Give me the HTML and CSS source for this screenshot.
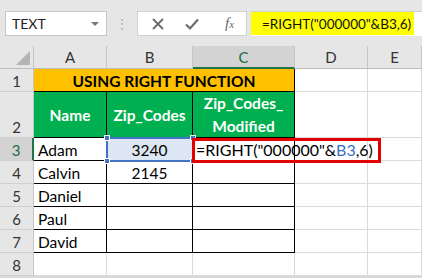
FILE: index.html
```html
<!DOCTYPE html>
<html>
<head>
<meta charset="utf-8">
<link rel="stylesheet" href="styles.css">
</head>
<body>
<div class="toolbar">
  <div class="namebox"><span>TEXT</span><span class="caret"></span></div>
  <div class="grip">⋮</div>
  <div class="fbtns">
    <svg class="ico" width="14" height="14" viewBox="0 0 14 14"><path d="M2 2L12 12M12 2L2 12" stroke="#6b6b6b" stroke-width="1.8" fill="none"/></svg>
    <svg class="ico" width="16" height="14" viewBox="0 0 16 14"><path d="M2 7.5L6 11.5L14 2.5" stroke="#6b6b6b" stroke-width="2.2" fill="none"/></svg>
    <span class="fx"><i>f</i><small>x</small></span>
  </div>
  <div class="fwrap"><div class="fbar"><span class="ftext">=RIGHT("000000"&amp;B3,6)</span></div></div>
</div>
<div class="sheet">
  <div class="corner"><span class="tri"></span></div>
  <div class="ch">A</div><div class="ch">B</div><div class="ch sel">C</div><div class="ch">D</div><div class="ch">E</div>

  <div class="rh">1</div>
  <div class="c title">USING RIGHT FUNCTION</div>
  <div class="c"></div><div class="c"></div>

  <div class="rh tall">2</div>
  <div class="c head">Name</div><div class="c head">Zip_Codes</div><div class="c head wrap">Zip_Codes_<br>Modified</div>
  <div class="c"></div><div class="c"></div>

  <div class="rh sel">3</div>
  <div class="c b">Adam</div><div class="c b num active">3240</div><div class="c b formula">=RIGHT("000000"&amp;<span class="ref">B3</span>,6)<span class="cur"></span></div>
  <div class="c"></div><div class="c"></div>

  <div class="rh">4</div>
  <div class="c b">Calvin</div><div class="c b num">2145</div><div class="c b"></div>
  <div class="c"></div><div class="c"></div>

  <div class="rh">5</div>
  <div class="c b">Daniel</div><div class="c b"></div><div class="c b"></div>
  <div class="c"></div><div class="c"></div>

  <div class="rh">6</div>
  <div class="c b">Paul</div><div class="c b"></div><div class="c b"></div>
  <div class="c"></div><div class="c"></div>

  <div class="rh">7</div>
  <div class="c b">David</div><div class="c b"></div><div class="c b"></div>
  <div class="c"></div><div class="c"></div>

  <div class="rh">8</div>
  <div class="c"></div><div class="c"></div><div class="c"></div><div class="c"></div><div class="c"></div>

  <div class="redbox"></div>
  <div class="selbox"><span class="h h1"></span><span class="h h2"></span><span class="h h3"></span><span class="h h4"></span></div>
</div>
</body>
</html>
```
FILE: styles.css
```css
* { box-sizing: border-box; }
html, body { margin: 0; padding: 0; }
body {
  width: 422px; height: 278px; overflow: hidden;
  background: #d9d9d9;
  font-family: Lato, "Open Sans", sans-serif;
  color: #000;
}
.toolbar {
  height: 46px;
  background: #e6e6e6;
  display: flex;
  align-items: flex-start;
  padding-top: 11px;
  padding-left: 5px;
}
.namebox {
  width: 102px; height: 25px;
  background: #fff;
  border: 1px solid #c8c8c8;
  display: flex; align-items: center; justify-content: space-between;
  padding: 0 7px 0 6px;
  font-size: 14px; color: #222;
}
.caret {
  width: 0; height: 0;
  border-left: 4px solid transparent; border-right: 4px solid transparent;
  border-top: 4px solid #777;
}
.grip { width: 30px; text-align: center; color: #b0b0b0; font-size: 14px; line-height: 25px; }
.fbtns {
  width: 110px; height: 25px;
  background: #fff;
  border: 1px solid #d0d0d0;
  display: flex; align-items: center;
  padding-left: 13px; gap: 19px;
}
.fx { font-family: "Liberation Serif", serif; color: #666; font-size: 15px; margin-left: 6px; }
.fx small { font-size: 11px; font-style: italic; }
.fwrap {
  margin-left: 4px;
  flex: 1;
  height: 25px;
  background: #fff;
  border-top: 1px solid #d0d0d0;
}
.fbar {
  width: 163px; height: 23px;
  background: #ffff00;
  display: flex; align-items: center;
  padding-left: 11px;
  font-size: 13.5px; color: #111;
  white-space: nowrap;
}
.sheet {
  position: relative;
  display: grid;
  grid-template-columns: 34px 73px 86px 102px 73px 54px;
  grid-template-rows: 23px 23px 46px 23px 23px 23px 23px 23px 23px;
  background: #fff;
  height: 230px;
  font-size: 15.5px;
}
.corner { background: #e6e6e6; border-right: 1px solid #c6c6c6; border-bottom: 1px solid #bdbdbd; position: relative; }
.tri {
  position: absolute; right: 3px; bottom: 3px;
  width: 0; height: 0;
  border-left: 14px solid transparent;
  border-bottom: 14px solid #b4b4b4;
}
.ch {
  background: #e6e6e6;
  border-right: 1px solid #c6c6c6; border-bottom: 1px solid #bdbdbd;
  display: flex; align-items: center; justify-content: center;
  color: #333; font-size: 15px;
}
.ch.sel { background: #d3d3d3; color: #216b42; border-bottom: 2px solid #217346; }
.rh {
  background: #e6e6e6;
  border-right: 1px solid #c6c6c6; border-bottom: 1px solid #d0d0d0;
  display: flex; align-items: flex-end; justify-content: center;
  padding-bottom: 1px;
  color: #333; font-size: 15px;
}
.rh.sel { background: #d3d3d3; color: #216b42; border-right: 2px solid #217346; }
.c {
  border-right: 1px solid #dadada; border-bottom: 1px solid #dadada;
  display: flex; align-items: flex-end;
  padding: 0 0 1px 4px;
  white-space: nowrap;
}
.c.b { border-right-color: #000; border-bottom-color: #000; }
.title {
  grid-column: span 3;
  background: #ffc000; font-weight: bold;
  justify-content: center;
  border-right: 1px solid #000; border-bottom: 1px solid #000;
  padding-left: 0; font-size: 15.5px;
}
.head {
  background: #00b050; color: #fff; font-weight: bold;
  justify-content: center; align-items: center;
  border-right: 1px solid #000; border-bottom: 1px solid #000;
  padding: 0;
}
.head.wrap { text-align: center; line-height: 23px; align-items: center; }
.num { justify-content: center; padding-left: 0; }
.active { background: #dde7f3; }
.formula { overflow: visible; padding-left: 3px; z-index: 1; font-size: 16px; }
.ref { color: #3a6fc4; }
.cur { display: inline-block; width: 1px; height: 18px; background: #000; margin-left: 2px; margin-bottom: 1px; }
.redbox {
  position: absolute; left: 192px; top: 92px;
  width: 189px; height: 25px;
  border: 3px solid #e50000;
  z-index: 2;
}
.selbox {
  position: absolute; left: 106px; top: 91px;
  width: 88px; height: 25px;
  border: 2px solid #4472c4;
  z-index: 1;
}
.h { position: absolute; width: 6px; height: 6px; background: #4472c4; border: 1px solid #fff; }
.h1 { left: -4px; top: -4px; }
.h2 { right: -4px; top: -4px; }
.h3 { left: -4px; bottom: -4px; }
.h4 { right: -4px; bottom: -4px; }
```
